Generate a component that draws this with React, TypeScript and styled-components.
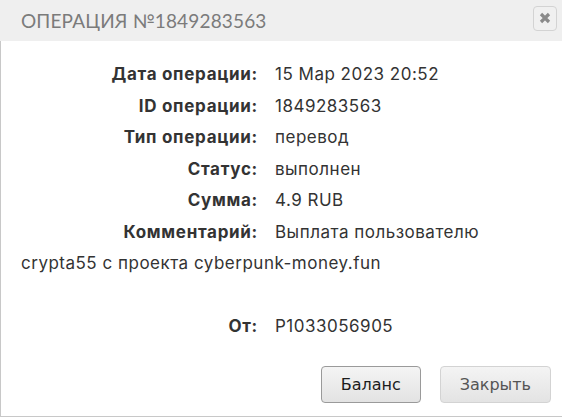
import React from "react";
import styled, { createGlobalStyle } from "styled-components";

const Global = createGlobalStyle`
  html, body { margin: 0; padding: 0; background: #ffffff; overflow: hidden; }
  * { box-sizing: border-box; }
`;

const Dialog = styled.div`
  width: 562px;
  height: 417px;
  border-left: 1px solid #c8c8c8;
  border-bottom: 1px solid #c8c8c8;
  background: #ffffff;
  display: flex;
  flex-direction: column;
`;

const Header = styled.div`
  height: 41px;
  background: #efefef;
  display: flex;
  align-items: center;
  justify-content: space-between;
  padding: 0 5px 0 21px;
  margin-left: -1px;
`;

const Title = styled.div`
  font-family: Lato, "Liberation Sans", sans-serif;
  font-size: 19px;
  letter-spacing: 0.15px;
  color: #7b7b7b;
  text-transform: uppercase;
`;

const CloseButton = styled.button`
  width: 24px;
  height: 25px;
  border: 1px solid #d3d3d3;
  border-radius: 4px;
  background: #f0f0f0;
  display: flex;
  align-items: center;
  justify-content: center;
  padding: 0;
  margin-top: -5px;
`;

const Content = styled.div`
  padding: 18px 20px 0 20px;
  font-family: Inter, "Noto Sans", sans-serif;
  font-size: 17px;
  color: #333333;
  line-height: 31.5px;
`;

const Row = styled.div`
  min-height: 31.5px;
`;

const Label = styled.span`
  display: inline-block;
  width: 237px;
  text-align: right;
  font-weight: 700;
  letter-spacing: 0.7px;
  color: #333333;
  margin-right: 17px;
`;

const Value = styled.span`
  font-weight: 400;
  letter-spacing: 0.5px;
`;

const Footer = styled.div`
  display: flex;
  justify-content: flex-end;
  gap: 19px;
  padding-right: 11px;
  margin-top: 23px;
`;

const Button = styled.button<{ $active?: boolean }>`
  height: 37px;
  padding: 0 ${(p) => (p.$active ? "18px" : "19px")};
  min-width: ${(p) => (p.$active ? "100px" : "111px")};
  border: 1px solid ${(p) => (p.$active ? "#9a9a9a" : "#d3d3d3")};
  border-radius: 4px;
  background: linear-gradient(#f4f4f4, #e3e3e3);
  font-family: "DejaVu Sans", Verdana, sans-serif;
  font-size: 16px;
  color: ${(p) => (p.$active ? "#1c1c1c" : "#555555")};
`;

const rows: [string, string[]][] = [
  ["Дата операции:", ["15 Мар 2023 20:52"]],
  ["ID операции:", ["1849283563"]],
  ["Тип операции:", ["перевод"]],
  ["Статус:", ["выполнен"]],
  ["Сумма:", ["4.9 RUB"]],
  ["Комментарий:", ["Выплата пользователю", "crypta55 с проекта cyberpunk-money.fun"]],
];

export default function App() {
  return (
    <>
      <Global />
      <Dialog>
        <Header>
          <Title>Операция №1849283563</Title>
          <CloseButton aria-label="close">
            <svg width="12" height="12" viewBox="0 0 12 12">
              <path d="M2 2 L10 10 M10 2 L2 10" stroke="#8a8a8a" strokeWidth="3.2" strokeLinecap="butt" />
            </svg>
          </CloseButton>
        </Header>
        <Content>
          {rows.map(([l, parts]) => (
            <Row key={l}>
              <Label>{l}</Label>
              {parts.map((p, i) => (
                <React.Fragment key={i}>
                  {i > 0 && " "}
                  <Value>{p}</Value>
                </React.Fragment>
              ))}
            </Row>
          ))}
          <Row />
          <Row>
            <Label>От:</Label>
            <Value>P1033056905</Value>
          </Row>
        </Content>
        <Footer>
          <Button $active>Баланс</Button>
          <Button>Закрыть</Button>
        </Footer>
      </Dialog>
    </>
  );
}
